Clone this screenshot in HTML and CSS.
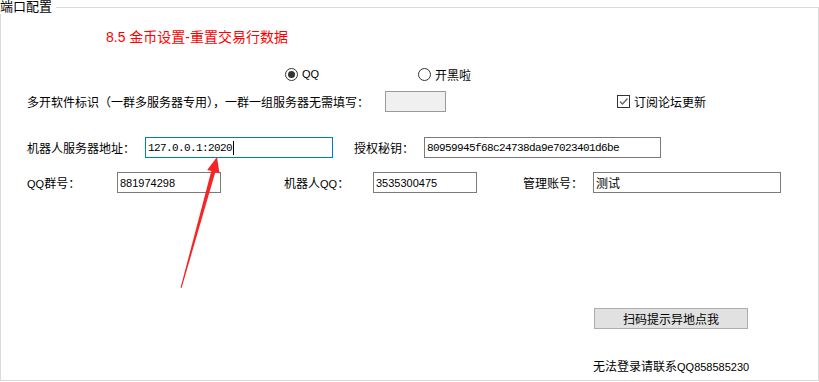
FILE: index.html
```html
<!DOCTYPE html>
<html>
	<head>
		<meta charset="UTF-8">
		<title>端口配置</title>
		<link rel="stylesheet" href="styles.css">
	</head>
	<body>
		<fieldset class="group">
			<legend>端口配置</legend>

			<div class="title">8.5 金币设置-重置交易行数据</div>

			<!--登录方式-->
			<div class="row radios">
				<label class="radio-item first"><span class="radio on"></span><span class="small">QQ</span></label>
				<label class="radio-item"><span class="radio"></span>开黑啦</label>
			</div>

			<div class="row">
				<span class="lbl w-multi">多开软件标识（一群多服务器专用），一群一组服务器无需填写：</span>
				<div class="field gray w-tag"></div>
				<label class="check-item">
					<span class="check">
						<svg width="11" height="11" viewBox="0 0 11 11"><path d="M2 5.5 L4.5 8 L9.5 2.5" fill="none" stroke="#666" stroke-width="1.3"/></svg>
					</span>订阅论坛更新
				</label>
			</div>

			<div class="row">
				<span class="lbl w-server">机器人服务器地址：</span>
				<div class="field focus w-server-in"><span class="mono">127.0.0.1:2020</span><span class="caret"></span></div>
				<span class="lbl w-key gap-key">授权秘钥：</span>
				<div class="field w-key-in"><span class="mono">80959945f68c24738da9e7023401d6be</span></div>
			</div>

			<div class="row row-qq">
				<span class="lbl w-group"><span class="small">QQ</span>群号：</span>
				<div class="field w-qq"><span class="num">881974298</span></div>
				<span class="lbl w-robot gap-robot">机器人<span class="small">QQ</span>：</span>
				<div class="field w-qq"><span class="num">3535300475</span></div>
				<span class="lbl w-admin gap-admin">管理账号：</span>
				<div class="field w-admin-in">测试</div>
			</div>

			<div class="row row-btn">
				<button class="btn">扫码提示异地点我</button>
			</div>

			<div class="contact">无法登录请联系<span class="small">QQ858585230</span></div>
		</fieldset>

		<!--红色箭头 指向服务器地址-->
		<svg class="arrow" width="819" height="382" viewBox="0 0 819 382">
			<polygon points="217,157 219.5,173.5 215.3,172.2 181.6,288 180.6,287.6 211.3,171 207.2,170" fill="#f52626"/>
		</svg>
	</body>
</html>
```

FILE: styles.css
```css
*{
	margin: 0px;
	padding: 0px;
	box-sizing: border-box;
}

body{
	width: 819px;
	height: 382px;
	background-color: #fff;
	position: relative;
	font-family: "Liberation Sans", "Noto Sans CJK SC", sans-serif;
	font-size: 12px;
	color: #000;
	overflow: hidden;
}

/*分组框*/
.group{
	width: 819px;
	height: 381px;
	border: solid 1px #dadada;
	padding: 0px;
	margin: 0px;
}

.group legend{
	font-size: 13px;
	line-height: 14px;
	padding: 0px 4px 0px 0px;
	margin-left: -1px;
}

.title{
	margin-top: 13px;
	margin-left: 105px;
	height: 20px;
	line-height: 20px;
	font-size: 14px;
	color: #ff0000;
}

/*每一行*/
.row{
	display: flex;
	align-items: center;
	padding-left: 26px;
}

.radios{
	margin-top: 17px;
	height: 20px;
	padding-left: 284px;
}

.radio-item{
	display: flex;
	align-items: center;
	gap: 4px;
}

.radio-item.first{
	width: 133px;
}

.radio{
	width: 13px;
	height: 13px;
	border: solid 1px #333;
	border-radius: 50%;
	display: flex;
	align-items: center;
	justify-content: center;
}

.radio.on::after{
	content: "";
	width: 7px;
	height: 7px;
	border-radius: 50%;
	background-color: #333;
}

.small{
	font-size: 11px;
}

.row + .row{
	margin-top: 25px;
}

.radios + .row{
	margin-top: 7px;
}

.row + .row.row-qq{
	margin-top: 14px;
}

.row .lbl{
	white-space: nowrap;
}

.w-multi{ width: 358px; }
.w-server{ width: 118px; }
.w-key{ width: 70px; }
.gap-key{ margin-left: 21px; }
.w-group{ width: 90px; }
.w-robot{ width: 89px; }
.gap-robot{ margin-left: 63px; }
.w-admin{ width: 70px; }
.gap-admin{ margin-left: 46px; }

/*输入框*/
.field{
	height: 21px;
	border: solid 1px #7a7a7a;
	background-color: #fff;
	display: flex;
	align-items: center;
	padding-left: 2px;
	white-space: nowrap;
}

.field.gray{
	background-color: #f0f0f0;
	border-color: #9a9a9a;
}

.field.focus{
	border-color: #0078d7;
}

.w-tag{ width: 61px; }
.w-server-in{ width: 188px; }
.w-key-in{ width: 237px; }
.w-qq{ width: 104px; }
.w-admin-in{ width: 188px; }

.mono{
	font-family: "Liberation Mono", monospace;
	font-size: 11px;
	letter-spacing: -0.6px;
}

.num{
	font-size: 11px;
}

.caret{
	width: 1px;
	height: 14px;
	background-color: #000;
	margin-left: 1px;
}

/*复选框*/
.check-item{
	display: flex;
	align-items: center;
	gap: 4px;
	margin-left: 171px;
}

.check{
	width: 13px;
	height: 13px;
	border: solid 1px #333;
	display: flex;
	align-items: center;
	justify-content: center;
}

.row + .row.row-btn{
	margin-top: 115px;
	padding-left: 593px;
}

.btn{
	width: 154px;
	height: 21px;
	background-color: #e1e1e1;
	border: solid 1px #adadad;
	font-family: "Liberation Sans", "Noto Sans CJK SC", sans-serif;
	font-size: 12px;
	color: #000;
}

.contact{
	margin-top: 30px;
	margin-left: 592px;
	height: 16px;
	line-height: 16px;
}

/*箭头*/
.arrow{
	position: absolute;
	left: 0px;
	top: 0px;
	pointer-events: none;
}
```
